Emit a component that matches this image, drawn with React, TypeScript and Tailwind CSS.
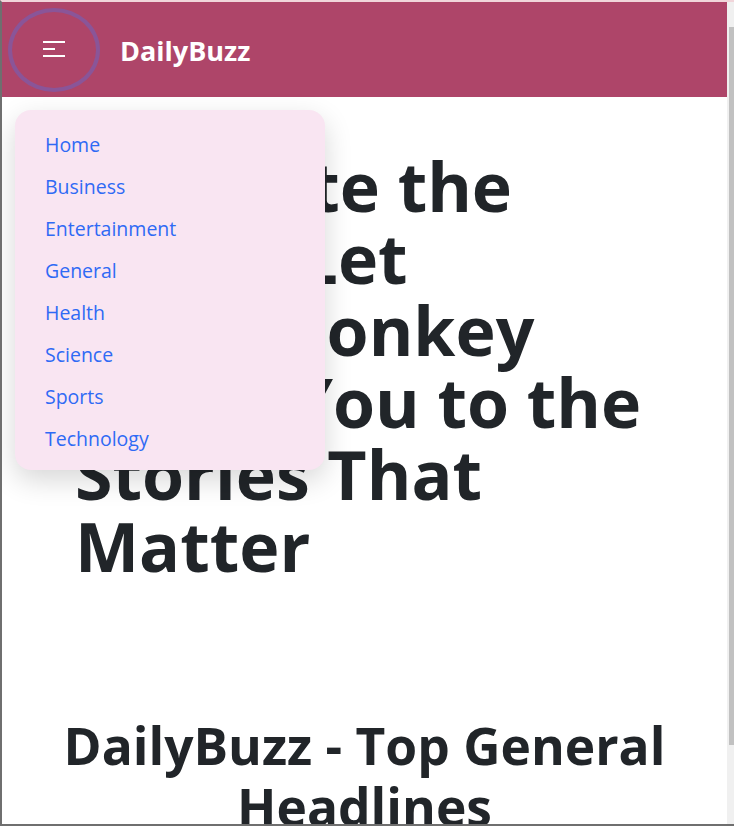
const categories = ['Home', 'Business', 'Entertainment', 'General', 'Health', 'Science', 'Sports', 'Technology'];

function MenuIcon() {
  return (
    <svg width="22" height="17" viewBox="0 0 22 17" fill="#fff">
      <rect x="0" y="0" width="22" height="2" />
      <rect x="0" y="7" width="12" height="2" />
      <rect x="0" y="14" width="22" height="2" />
    </svg>
  );
}

export default function App() {
  return (
    <div className="flex h-[826px] w-[734px] overflow-hidden border-b-2 border-l-2 border-t-2 border-[#6f6f6f] border-t-[#f1d5da] bg-white font-['Open_Sans',sans-serif]">
      <div className="relative flex flex-1 flex-col">
        <nav className="flex h-[95px] shrink-0 items-center bg-[#ae4569]">
          <button className="ml-[10px] flex h-[76px] w-[84px] items-center justify-center rounded-[50%] ring-4 ring-[#8a5598]">
            <MenuIcon />
          </button>
          <span className="ml-[24px] pt-[4px] text-[27px] font-bold text-white">DailyBuzz</span>
        </nav>

        <div className="absolute left-[13px] top-[108px] flex w-[310px] flex-col rounded-2xl bg-[#f9e5f2] pb-[10px] pl-[30px] pt-[14px] shadow-[0_10px_28px_rgba(0,0,0,0.16)]">
          {categories.map((c) => (
            <a key={c} href="#" className="text-[19.5px] leading-[42px] text-[#2f6af5]">
              {c}
            </a>
          ))}
        </div>

        <h1 className="ml-[73px] mt-[53px] w-[590px] text-[68px] font-bold leading-[72px] text-[#212529]">
          Navigate the News: Let NewsMonkey Guide You to the Stories That Matter
        </h1>

        <h2 className="mt-[133px] text-center text-[51.5px] font-bold leading-[61px] text-[#212529]">
          DailyBuzz - Top General Headlines
        </h2>
      </div>

      <div className="w-[7px] shrink-0 bg-[#f0f0f0] pl-[2px] pt-[25px]">
        <div className="h-[718px] w-[5px] bg-[#c1c1c1]" />
      </div>
    </div>
  );
}
